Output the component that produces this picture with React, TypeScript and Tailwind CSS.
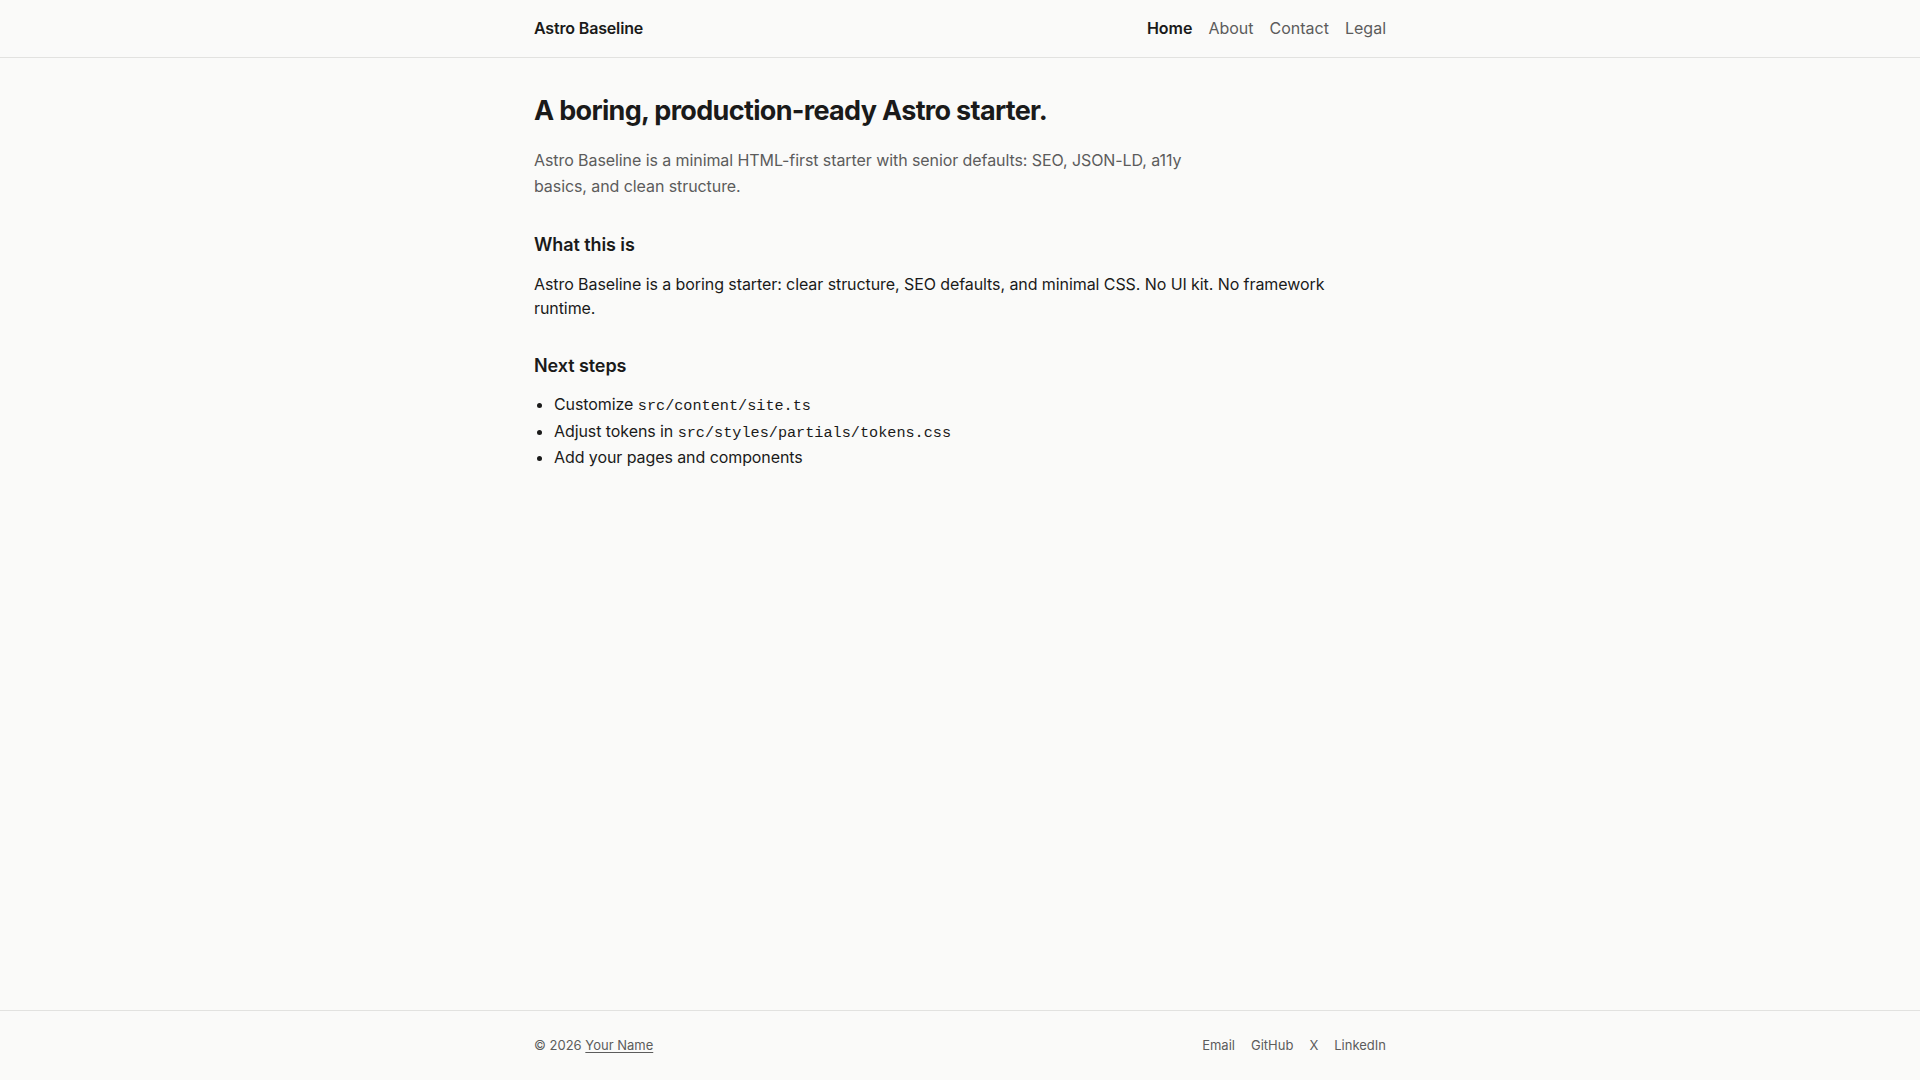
const navItems = [
  { label: "Home", active: true },
  { label: "About" },
  { label: "Contact" },
  { label: "Legal" },
];

const footerLinks = ["Email", "GitHub", "X", "LinkedIn"];

function Code({ children }: { children: React.ReactNode }) {
  return (
    <code className="font-['Liberation_Mono',monospace] text-[0.95em] leading-none tracking-normal">
      {children}
    </code>
  );
}

export default function App() {
  return (
    <div className="min-h-screen flex flex-col bg-[#fafaf9] text-[#1a1a1a] font-['Inter',sans-serif]">
      {/* Header */}
      <header className="border-b border-[#e2e2e0]">
        <div className="max-w-[900px] mx-auto px-6 h-[57px] pb-px flex items-center justify-between">
          <a className="text-base font-semibold tracking-[-0.01em]">Astro Baseline</a>
          <nav className="flex items-center gap-4 text-base">
            {navItems.map((item) => (
              <a
                key={item.label}
                className={item.active ? "font-semibold text-[#1a1a1a]" : "text-[#5c5c5c]"}
              >
                {item.label}
              </a>
            ))}
          </nav>
        </div>
      </header>

      {/* Main */}
      <main className="flex-1">
        <div className="max-w-[900px] mx-auto px-6 pt-[37px] tracking-[-0.005em]">
          <h1 className="text-[27px] leading-[1.2] font-bold tracking-[-0.025em]">
            A boring, production-ready Astro starter.
          </h1>
          <p className="mt-[21px] max-w-[680px] text-base leading-[1.6] text-[#5c5c5c]">
            Astro Baseline is a minimal HTML-first starter with senior defaults: SEO, JSON-LD,
            a11y basics, and clean structure.
          </p>

          <h2 className="mt-[33px] text-lg leading-[1.3] font-semibold">What this is</h2>
          <p className="mt-4 text-base leading-6">
            Astro Baseline is a boring starter: clear structure, SEO defaults, and minimal CSS. No
            UI kit. No framework runtime.
          </p>

          <h2 className="mt-[34px] text-lg leading-[1.3] font-semibold">Next steps</h2>
          <ul className="mt-[14px] list-disc pl-5 text-base leading-[26.5px]">
            <li>
              Customize <Code>src/content/site.ts</Code>
            </li>
            <li>
              Adjust tokens in <Code>src/styles/partials/tokens.css</Code>
            </li>
            <li>Add your pages and components</li>
          </ul>
        </div>
      </main>

      {/* Footer */}
      <footer className="border-t border-[#e2e2e0]">
        <div className="max-w-[900px] mx-auto px-6 h-[69px] flex items-center justify-between text-[13px] text-[#5c5c5c]">
          <p>
            © 2026 <a className="underline underline-offset-2">Your Name</a>
          </p>
          <nav className="flex items-center gap-4">
            {footerLinks.map((l) => (
              <a key={l}>{l}</a>
            ))}
          </nav>
        </div>
      </footer>
    </div>
  );
}
